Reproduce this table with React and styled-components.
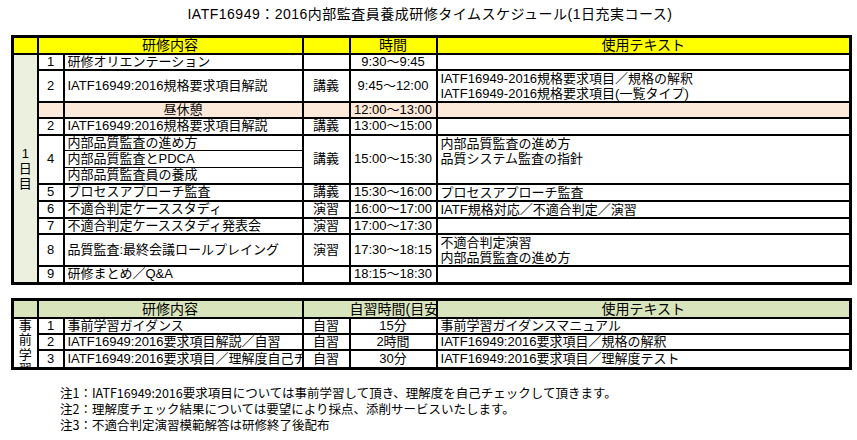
import React from "react";
import styled, { createGlobalStyle } from "styled-components";

const GlobalStyle = createGlobalStyle`
  html, body { margin: 0; padding: 0; background: #fff; }
  body {
    font-family: "Liberation Sans", "Noto Sans CJK JP", sans-serif;
    color: #000;
  }
`;

const Page = styled.div`
  width: 857px;
  height: 440px;
  box-sizing: border-box;
  padding: 4px 0 0 11px;
  overflow: hidden;
`;

const Title = styled.h1`
  margin: 0 0 11px;
  width: 838px;
  font-size: 14px;
  font-weight: normal;
  line-height: 20px;
  letter-spacing: 0.5px;
  text-align: center;
`;

const Table = styled.table`
  border-collapse: collapse;
  table-layout: fixed;
  width: 838px;
  border: 3px solid #000;
  font-size: 13px;
  line-height: 14px;
  margin-bottom: ${(p) => p.$gap || 0}px;
`;

const Row = styled.tr`
  height: ${(p) => p.$h}px;
  background: ${(p) => p.$bg || "transparent"};
`;

const Cell = styled.td`
  border: 2px solid #000;
  padding: 0 3px;
  white-space: nowrap;
  overflow: hidden;
  line-height: 14px;
  text-align: ${(p) => p.$align || "left"};
  vertical-align: ${(p) => p.$valign || "middle"};
  background: ${(p) => p.$bg || "transparent"};
  ${(p) => (p.$thinTop ? "border-top-width: 1px;" : "")}
  ${(p) => (p.$thinBottom ? "border-bottom-width: 1px;" : "")}
`;

const HeadCell = styled(Cell).attrs({ as: "th" })`
  font-weight: normal;
  font-size: 14px;
  text-align: ${(p) => p.$align || "center"};
  padding-left: ${(p) => p.$indent || 3}px;
`;

const DayLabel = styled.div`
  display: flex;
  flex-direction: column;
  align-items: center;
  line-height: ${(p) => p.$lh || 15}px;
  height: ${(p) => (p.$clip ? `${p.$clip}px` : "auto")};
  overflow: hidden;
`;

const Lines = styled.div`
  display: flex;
  flex-direction: column;
  line-height: 15px;
`;

const Notes = styled.div`
  margin: 15px 0 0 49px;
  font-family: "Noto Sans CJK JP", sans-serif;
  font-size: 12.5px;
  line-height: 16px;
`;

const COLS = [25, 26, 239, 47, 87, 414];

const Cols = () => (
  <colgroup>
    {COLS.map((w, i) => (
      <col key={i} style={{ width: w }} />
    ))}
  </colgroup>
);

const YELLOW = "#ffff00";
const DAYGREEN = "#ebf1de";
const PEACH = "#fde9d9";
const KHAKI = "#d8e4bc";

const schedule = [
  { n: "1", c: "研修オリエンテーション", t: "", time: "9:30～9:45", x: [], h: 16 },
  {
    n: "2",
    c: "IATF16949:2016規格要求項目解説",
    t: "講義",
    time: "9:45～12:00",
    x: ["IATF16949-2016規格要求項目／規格の解釈", "IATF16949-2016規格要求項目(一覧タイプ)"],
    h: 32,
  },
  { lunch: true, c: "昼休憩", time: "12:00～13:00", h: 16 },
  { n: "2", c: "IATF16949:2016規格要求項目解説", t: "講義", time: "13:00～15:00", x: [], h: 17 },
  {
    n: "4",
    sub: ["内部品質監査の進め方", "内部品質監査とPDCA", "内部品質監査員の養成"],
    t: "講義",
    time: "15:00～15:30",
    x: ["内部品質監査の進め方", "品質システム監査の指針"],
  },
  { n: "5", c: "プロセスアプローチ監査", t: "講義", time: "15:30～16:00", x: ["プロセスアプローチ監査"], h: 16 },
  { n: "6", c: "不適合判定ケーススタディ", t: "演習", time: "16:00～17:00", x: ["IATF規格対応／不適合判定／演習"], h: 17 },
  { n: "7", c: "不適合判定ケーススタディ発表会", t: "演習", time: "17:00～17:30", x: [], h: 16 },
  {
    n: "8",
    c: "品質監査:最終会議ロールプレイング",
    t: "演習",
    time: "17:30～18:15",
    x: ["不適合判定演習", "内部品質監査の進め方"],
    h: 32,
  },
  { n: "9", c: "研修まとめ／Q&A", t: "", time: "18:15～18:30", x: [], h: 18 },
];

const selfStudy = [
  { n: "1", c: "事前学習ガイダンス", t: "自習", time: "15分", x: "事前学習ガイダンスマニュアル", h: 16 },
  { n: "2", c: "IATF16949:2016要求項目解説／自習", t: "自習", time: "2時間", x: "IATF16949:2016要求項目／規格の解釈", h: 16 },
  { n: "3", c: "IATF16949:2016要求項目／理解度自己チェック", t: "自習", time: "30分", x: "IATF16949:2016要求項目／理解度テスト", h: 17 },
];

const TextLines = ({ items }) =>
  items.length ? (
    <Lines>
      {items.map((s, i) => (
        <span key={i}>{s}</span>
      ))}
    </Lines>
  ) : null;

function ScheduleRows() {
  const out = [];
  schedule.forEach((r, i) => {
    const day =
      i === 0 ? (
        <Cell rowSpan={12} $align="center" $bg={DAYGREEN}>
          <DayLabel>
            <span>1</span>
            <span>日</span>
            <span>目</span>
          </DayLabel>
        </Cell>
      ) : null;
    if (r.lunch) {
      out.push(
        <Row key={i} $h={r.h} $bg={PEACH}>
          {day}
          <Cell />
          <Cell $align="center">{r.c}</Cell>
          <Cell />
          <Cell $align="center">{r.time}</Cell>
          <Cell />
        </Row>
      );
    } else if (r.sub) {
      r.sub.forEach((s, j) =>
        out.push(
          <Row key={`${i}-${j}`} $h={j === 1 ? 17 : 16}>
            {j === 0 && (
              <Cell rowSpan={3} $align="center">
                {r.n}
              </Cell>
            )}
            <Cell $thinTop={j > 0} $thinBottom={j < 2}>
              {s}
            </Cell>
            {j === 0 && (
              <>
                <Cell rowSpan={3} $align="center">
                  {r.t}
                </Cell>
                <Cell rowSpan={3} $align="center">
                  {r.time}
                </Cell>
                <Cell rowSpan={3} $valign="top">
                  <TextLines items={r.x} />
                </Cell>
              </>
            )}
          </Row>
        )
      );
    } else {
      out.push(
        <Row key={i} $h={r.h}>
          {day}
          <Cell $align="center">{r.n}</Cell>
          <Cell>{r.c}</Cell>
          <Cell $align="center">{r.t}</Cell>
          <Cell $align="center">{r.time}</Cell>
          <Cell>
            <TextLines items={r.x} />
          </Cell>
        </Row>
      );
    }
  });
  return out;
}

export default function App() {
  return (
    <>
      <GlobalStyle />
      <Page>
        <Title>IATF16949：2016内部監査員養成研修タイムスケジュール(1日充実コース)</Title>

        <Table $gap={13}>
          <Cols />
          <tbody>
            <Row $h={17} $bg={YELLOW}>
              <HeadCell />
              <HeadCell colSpan={2}>研修内容</HeadCell>
              <HeadCell />
              <HeadCell>時間</HeadCell>
              <HeadCell>使用テキスト</HeadCell>
            </Row>
            <ScheduleRows />
          </tbody>
        </Table>

        <Table>
          <Cols />
          <tbody>
            <Row $h={18} $bg={KHAKI}>
              <HeadCell />
              <HeadCell colSpan={2}>研修内容</HeadCell>
              <HeadCell colSpan={2} $align="left" $indent={46}>
                自習時間(目安)
              </HeadCell>
              <HeadCell>使用テキスト</HeadCell>
            </Row>
            {selfStudy.map((r, i) => (
              <Row key={i} $h={r.h}>
                {i === 0 && (
                  <Cell rowSpan={3} $align="center" $valign="top">
                    <DayLabel $lh={14.5} $clip={48}>
                      <span>事</span>
                      <span>前</span>
                      <span>学</span>
                      <span>習</span>
                    </DayLabel>
                  </Cell>
                )}
                <Cell $align="center">{r.n}</Cell>
                <Cell>{r.c}</Cell>
                <Cell $align="center">{r.t}</Cell>
                <Cell $align="center">{r.time}</Cell>
                <Cell>{r.x}</Cell>
              </Row>
            ))}
          </tbody>
        </Table>

        <Notes>
          <div>注1：IATF16949:2016要求項目については事前学習して頂き、理解度を自己チェックして頂きます。</div>
          <div>注2：理解度チェック結果については要望により採点、添削サービスいたします。</div>
          <div>注3：不適合判定演習模範解答は研修終了後配布</div>
        </Notes>
      </Page>
    </>
  );
}
